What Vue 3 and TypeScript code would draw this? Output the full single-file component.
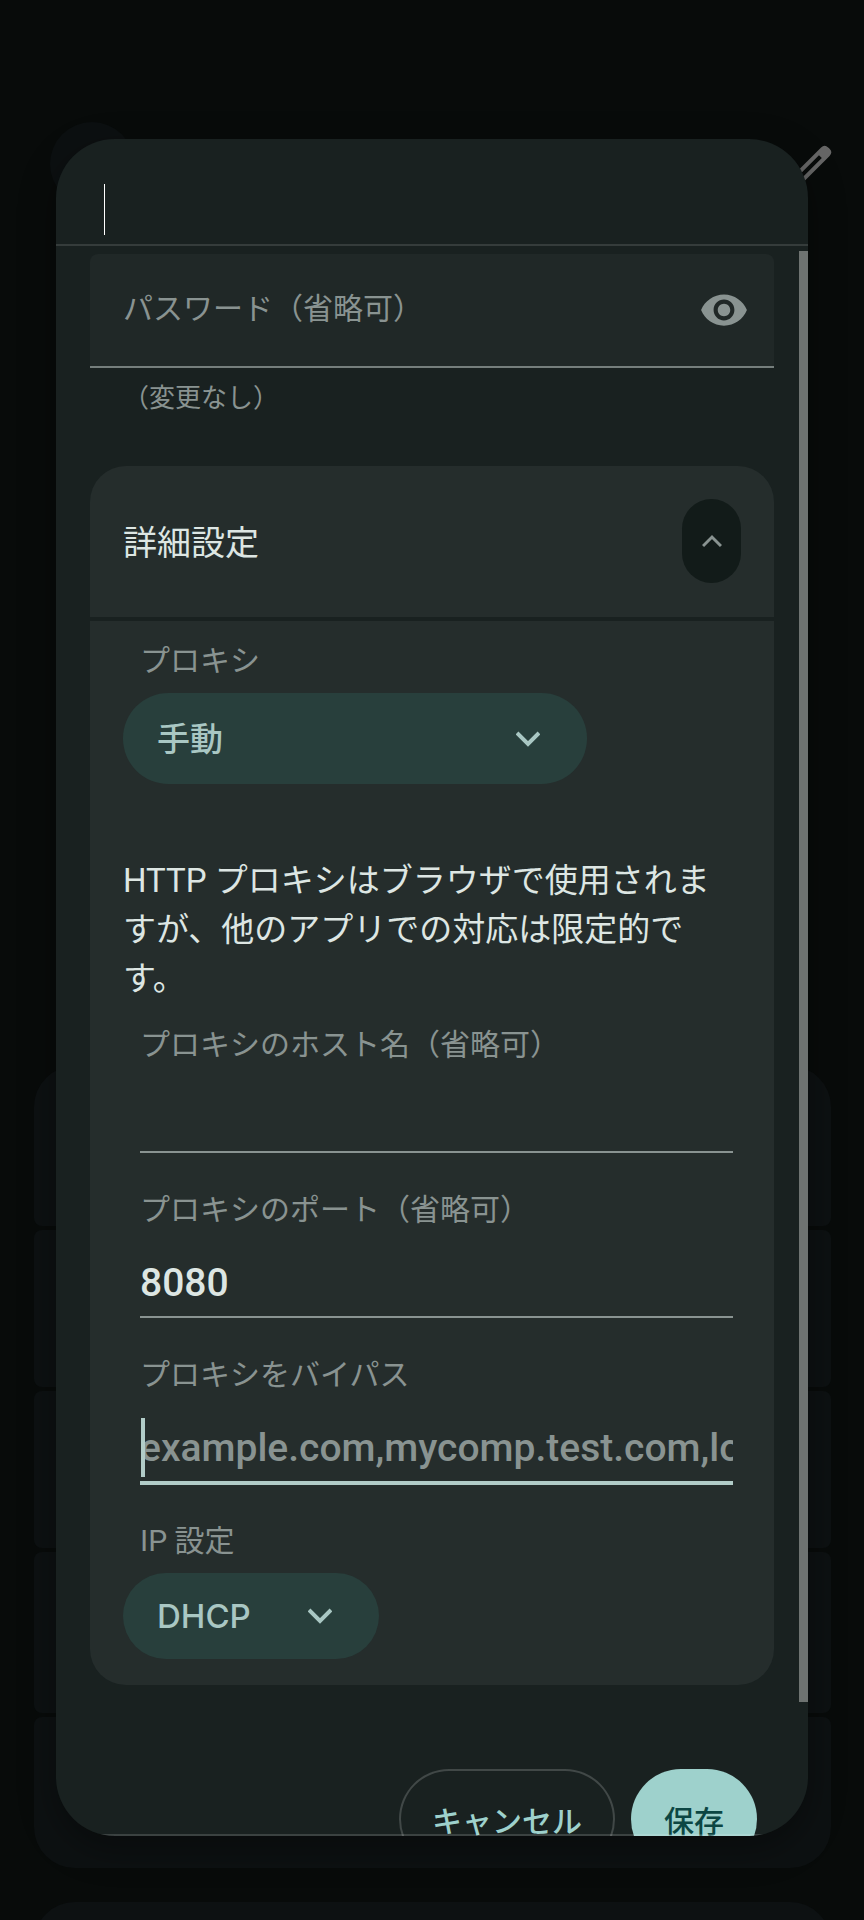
<script setup lang="ts">
import { ref } from 'vue'

const title = ref('')
const password = ref('')
const proxy = ref('手動')
const host = ref('')
const port = ref('8080')
const bypass = ref('')
const ip = ref('DHCP')
const showPassword = ref(false)
const expanded = ref(true)
const rows = [1, 2, 3, 4, 5]
</script>

<template>
  <div class="page">
    <div class="behind" aria-hidden="true">
      <div class="avatar"></div>
      <svg class="pencil" viewBox="0 0 60 60">
        <g transform="rotate(-45 30 30)">
          <path
            fill-rule="evenodd"
            d="M-8 24h71q5 0 5 5v2q0 5-5 5h-71z M-4 28v4h60v-4z"
          />
        </g>
      </svg>
      <div class="rows">
        <div v-for="r in rows" :key="r" class="row"></div>
      </div>
      <div class="next-card"></div>
    </div>

    <form class="dialog" role="dialog" aria-label="詳細設定" @submit.prevent>
      <header class="head">
        <input v-model="title" class="title" type="text" aria-label="ネットワーク名" />
        <span class="title-caret"></span>
      </header>

      <div class="scroll">
        <div class="content">
          <div class="password">
            <input
              id="password"
              v-model="password"
              :type="showPassword ? 'text' : 'password'"
              placeholder="パスワード（省略可）"
              aria-label="パスワード（省略可）"
            />
            <button type="button" class="eye" aria-label="パスワードを表示" @click="showPassword = !showPassword">
              <svg viewBox="0 0 24 24">
                <path
                  d="M12 4.5C7 4.5 2.73 7.61 1 12c1.73 4.39 6 7.5 11 7.5s9.27-3.11 11-7.5c-1.73-4.39-6-7.5-11-7.5zM12 17c-2.76 0-5-2.24-5-5s2.24-5 5-5 5 2.24 5 5-2.24 5-5 5zm0-8c-1.66 0-3 1.34-3 3s1.34 3 3 3 3-1.34 3-3-1.34-3-3-3z"
                />
              </svg>
            </button>
          </div>
          <div class="helper">（変更なし）</div>

          <section class="card-head">
            <h2>詳細設定</h2>
            <button type="button" class="toggle" aria-label="詳細設定を閉じる" @click="expanded = !expanded">
              <svg viewBox="0 0 20 14"><path d="M1 12 10 3l9 9" /></svg>
            </button>
          </section>

          <section v-show="expanded" class="card-body">
            <label class="label" for="proxy">プロキシ</label>
            <div class="select wide">
              <select id="proxy" v-model="proxy">
                <option>手動</option>
                <option>なし</option>
              </select>
              <svg viewBox="0 0 24 16"><path d="m1 2 11 11L23 2" /></svg>
            </div>

            <p class="note">HTTP プロキシはブラウザで使用されますが、他のアプリでの対応は限定的です。</p>

            <div class="field">
              <label class="label" for="host">プロキシのホスト名（省略可）</label>
              <input id="host" v-model="host" type="text" />
            </div>
            <div class="field">
              <label class="label" for="port">プロキシのポート（省略可）</label>
              <input id="port" v-model="port" type="text" />
            </div>
            <div class="field active">
              <label class="label" for="bypass">プロキシをバイパス</label>
              <input id="bypass" v-model="bypass" type="text" placeholder="example.com,mycomp.test.com,localhost" />
              <span class="caret"></span>
            </div>

            <label class="label" for="ip">IP 設定</label>
            <div class="select short">
              <select id="ip" v-model="ip">
                <option>DHCP</option>
                <option>静的</option>
              </select>
              <svg viewBox="0 0 24 16"><path d="m1 2 11 11L23 2" /></svg>
            </div>
          </section>

          <div class="actions">
            <button type="button" class="cancel">キャンセル</button>
            <button type="submit" class="save">保存</button>
          </div>
        </div>
        <div class="thumb"></div>
      </div>
      <div class="edge"></div>
    </form>
  </div>
</template>

<style>
html,
body {
  background: #080b0a;
}
</style>

<style scoped>
* {
  box-sizing: border-box;
}
.page {
  position: relative;
  height: 100vh;
  display: flex;
  padding: 139px 56px 84px;
  overflow: hidden;
  background: #080b0a;
  color: #dde6e3;
  font-family: Roboto, "Noto Sans CJK JP", sans-serif;
}
input,
select,
button {
  font: inherit;
  color: inherit;
  border: 0;
  margin: 0;
  background: none;
  outline: 0;
  appearance: none;
}
.behind {
  position: absolute;
  inset: 0;
}
.avatar {
  position: absolute;
  left: 50px;
  top: 122px;
  width: 84px;
  height: 84px;
  border-radius: 50%;
  background: #0c1011;
}
.pencil {
  position: absolute;
  right: 32px;
  top: 145px;
  width: 60px;
  height: 60px;
  fill: #666;
}
.rows {
  position: absolute;
  left: 34px;
  right: 33px;
  top: 1066px;
  display: flex;
  flex-direction: column;
  gap: 4px;
}
.row {
  height: 157px;
  border-radius: 8px;
  background: #0d1112;
}
.row:first-child {
  height: 160px;
  border-radius: 41px 41px 8px 8px;
}
.row:nth-child(4) {
  height: 161px;
}
.row:last-child {
  height: 151px;
  border-radius: 8px 8px 41px 41px;
}
.next-card {
  position: absolute;
  left: 34px;
  right: 33px;
  top: 1902px;
  height: 100px;
  border-radius: 41px;
  background: #0d1112;
}
.dialog {
  position: relative;
  flex: 1;
  min-width: 0;
  display: flex;
  flex-direction: column;
  overflow: hidden;
  border-radius: 59px;
  background: #192120;
  box-shadow: 0 12px 36px rgba(0, 0, 0, 0.35);
}
.head {
  position: relative;
  flex: none;
  height: 107px;
  border-bottom: 2px solid #353c3b;
}
.title {
  width: 100%;
  height: 100%;
  padding: 0 48px;
  font-size: 39px;
}
.title-caret {
  position: absolute;
  left: 48px;
  top: 45px;
  width: 1px;
  height: 51px;
  background: #fff;
}
.scroll {
  position: relative;
  flex: 1;
  min-height: 0;
  overflow: hidden;
}
.content {
  padding: 8px 34px 0;
}
.thumb {
  position: absolute;
  right: 0;
  top: 5px;
  bottom: 134px;
  width: 9px;
  background: #6e7371;
}
.edge {
  position: absolute;
  left: 0;
  right: 0;
  bottom: 0;
  height: 2px;
  background: rgba(255, 255, 255, 0.15);
}
.password {
  display: flex;
  align-items: center;
  height: 114px;
  padding: 0 25px 0 33px;
  border-radius: 8px 8px 0 0;
  border-bottom: 2px solid #757e7c;
  background: #202827;
}
.password input {
  flex: 1;
  min-width: 0;
  height: 100%;
  padding: 0 0 4px;
  font-size: 30px;
}
::placeholder {
  color: #899391;
  opacity: 1;
}
.eye {
  width: 50px;
  height: 50px;
  padding: 0;
}
.eye svg {
  display: block;
  width: 50px;
  height: 50px;
  fill: #899391;
}
.helper {
  padding: 10px 33px 48px;
  font-size: 26px;
  line-height: 40px;
  color: #899391;
}
.card-head {
  display: flex;
  align-items: center;
  justify-content: space-between;
  padding: 33px 33px 34px;
  border-radius: 36px 36px 0 0;
  background: #252d2c;
}
.card-head h2 {
  margin: 0;
  padding-top: 4px;
  font-size: 34px;
  line-height: 48px;
  font-weight: 400;
}
.toggle {
  display: flex;
  align-items: center;
  justify-content: center;
  width: 59px;
  height: 84px;
  padding: 0;
  border-radius: 30px;
  background: #121b19;
}
.toggle svg {
  width: 20px;
  height: 14px;
  fill: none;
  stroke: #899391;
  stroke-width: 3;
}
.card-body {
  margin-top: 4px;
  padding: 18px 33px 26px;
  border-radius: 0 0 36px 36px;
  background: #252d2c;
}
.label {
  display: block;
  padding-left: 17px;
  font-size: 30px;
  line-height: 44px;
  color: #899391;
}
.select {
  position: relative;
  margin-top: 10px;
  color: #a9c7c3;
}
.select select {
  display: block;
  width: 100%;
  height: 100%;
  padding: 0 34px;
  border-radius: 46px;
  background: #283f3c;
  font-family: Inter, "Noto Sans CJK JP", sans-serif;
  font-size: 33px;
  font-weight: 500;
}
.select svg {
  position: absolute;
  right: 47px;
  top: 50%;
  width: 24px;
  height: 16px;
  margin-top: -8px;
  fill: none;
  stroke: currentColor;
  stroke-width: 4;
  pointer-events: none;
}
.wide {
  width: 75%;
  height: 91px;
}
.short {
  width: 256px;
  height: 86px;
}
.note {
  margin: 72px 0 20px;
  font-size: 33px;
  line-height: 49px;
}
.field {
  position: relative;
  margin-bottom: 35px;
}
.field input {
  display: block;
  width: calc(100% - 25px);
  height: 86px;
  margin-left: 17px;
  padding: 18px 0 0;
  border-bottom: 2px solid #899391;
  font-size: 39px;
  font-weight: 500;
}
.field.active {
  margin-bottom: 34px;
}
.field.active input {
  height: 88px;
  border-bottom: 4px solid #b1ccc8;
}
.caret {
  position: absolute;
  left: 18px;
  bottom: 8px;
  width: 4px;
  height: 59px;
  background: #b1ccc8;
}
.actions {
  display: flex;
  justify-content: flex-end;
  gap: 16px;
  margin-top: 84px;
  padding-right: 17px;
}
.actions button {
  height: 100px;
  padding: 0 33px;
  border-radius: 51px;
  font-size: 30px;
  font-weight: 500;
}
.actions .cancel {
  box-shadow: inset 0 0 0 2px #414847;
  color: #9ed1cc;
}
.actions .save {
  background: #9ed1cc;
  color: #0c4643;
}
</style>
